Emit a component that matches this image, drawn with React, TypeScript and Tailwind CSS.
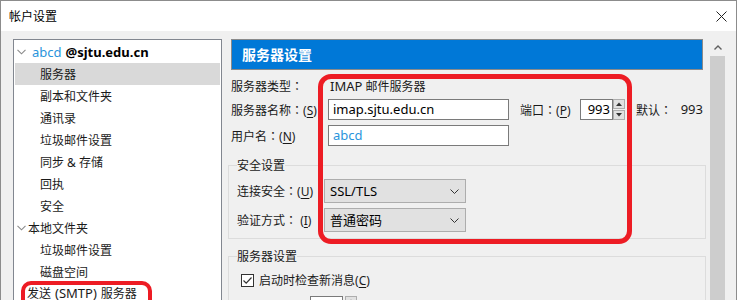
import React from "react";

function Chevron() {
  return (
    <svg width="9" height="6" viewBox="0 0 9 6" className="shrink-0">
      <path d="M0.5 0.8 L4.5 4.8 L8.5 0.8" fill="none" stroke="#8a8a8a" strokeWidth="1.1" />
    </svg>
  );
}

function Colon() {
  return <span className="font-['Noto_Sans_CJK_JP',sans-serif]">：</span>;
}

function Mn({ c }: { c: string }) {
  return (
    <span>
      (<span className="underline underline-offset-2">{c}</span>)
    </span>
  );
}

function Spinner() {
  return (
    <div className="flex h-[21px] w-[12px] flex-col justify-between">
      <div className="flex h-[10px] items-center justify-center border border-[#adadad] bg-[#e1e1e1]">
        <svg width="6" height="4" viewBox="0 0 6 4">
          <path d="M0 4 L3 0.5 L6 4 Z" fill="#333" />
        </svg>
      </div>
      <div className="flex h-[10px] items-center justify-center border border-[#adadad] bg-[#e1e1e1]">
        <svg width="6" height="4" viewBox="0 0 6 4">
          <path d="M0 0 L3 3.5 L6 0 Z" fill="#333" />
        </svg>
      </div>
    </div>
  );
}

function Select({ text }: { text: string }) {
  return (
    <div className="flex h-[24px] w-[142px] items-center justify-between border border-[#adadad] bg-[#e1e1e1] pl-[5px] pr-[6px] text-[13px] text-black">
      <span>{text}</span>
      <svg width="9" height="5" viewBox="0 0 9 5">
        <path d="M0.5 0.5 L4.5 4.5 L8.5 0.5" fill="none" stroke="#333" strokeWidth="1" />
      </svg>
    </div>
  );
}

function CheckBox({ checked }: { checked: boolean }) {
  return (
    <div className="flex h-[13px] w-[13px] shrink-0 items-center justify-center border border-[#333] bg-white">
      {checked && (
        <svg width="11" height="11" viewBox="0 0 11 11">
          <path d="M1.5 5.5 L4.2 8.2 L9.5 2.5" fill="none" stroke="#333" strokeWidth="1.2" />
        </svg>
      )}
    </div>
  );
}

const treeRows: { text: React.ReactNode; pl: string; selected?: boolean }[] = [
  { text: "服务器", pl: "pl-[25px]", selected: true },
  { text: "副本和文件夹", pl: "pl-[25px]" },
  { text: "通讯录", pl: "pl-[25px]" },
  { text: "垃圾邮件设置", pl: "pl-[25px]" },
  { text: "同步 & 存储", pl: "pl-[25px]" },
  { text: "回执", pl: "pl-[25px]" },
  { text: "安全", pl: "pl-[25px]" },
];

export default function App() {
  return (
    <div className="relative h-[300px] w-[737px] overflow-hidden border-x border-t border-[#8c8c8c] bg-[#f0f0f0] font-['Noto_Sans','Noto_Sans_CJK_SC',sans-serif] text-[12px] leading-[17px] text-[#1a1a1a]">
      {/* title bar */}
      <div className="flex h-[30px] items-center justify-between bg-white pl-[8px] pr-[9px]">
        <span className="text-[12px] text-black">帐户设置</span>
        <svg width="11" height="11" viewBox="0 0 11 11">
          <path d="M0.5 0.5 L10.5 10.5 M10.5 0.5 L0.5 10.5" stroke="#222" strokeWidth="1" />
        </svg>
      </div>

      {/* body */}
      <div className="flex pl-[12px] pt-[8px]">
        {/* tree */}
        <div className="h-[290px] w-[209px] shrink-0 border border-[#828790] bg-white p-px">
          <div className="flex h-[22px] items-center pl-[2px]">
            <Chevron />
            <span className="ml-[6px] text-[13px] text-[#2a94dc]">abcd</span>
            <span className="ml-[4px] text-[13px] font-bold text-black">@sjtu.edu.cn</span>
          </div>
          {treeRows.map((r, i) => (
            <div
              key={i}
              className={`flex h-[22px] items-center ${r.pl} ${r.selected ? "bg-[#d9d9d9]" : ""}`}
            >
              {r.text}
            </div>
          ))}
          <div className="flex h-[22px] items-center pl-[2px]">
            <Chevron />
            <span className="ml-[2px]">本地文件夹</span>
          </div>
          <div className="flex h-[22px] items-center pl-[25px]">垃圾邮件设置</div>
          <div className="flex h-[22px] items-center pl-[25px]">磁盘空间</div>
          <div className="flex h-[21px] items-center pl-[12px]">
            发送 <span className="mx-[4px] text-[13px]">(SMTP)</span> 服务器
          </div>
        </div>

        {/* right column */}
        <div className="ml-[6px] flex w-[478px] shrink-0 flex-col">
          <div className="mx-[3px] flex h-[31px] items-center border border-[#8a8a8a] bg-[#0078d7] pl-[10px] text-[14px] font-bold text-white">
            服务器设置
          </div>

          <div className="px-[3px]">
            <div className="mt-[6px] flex h-[20px] items-center">
              <span className="w-[99px] shrink-0">
                服务器类型<Colon />
              </span>
              <span>
                <span className="text-[13px]">IMAP</span> 邮件服务器
              </span>
            </div>

            <div className="mt-[3px] flex h-[21px] items-center">
              <span className="w-[97px] shrink-0 whitespace-nowrap">
                服务器名称<Colon />
                <Mn c="S" />
              </span>
              <div className="flex h-[21px] w-[181px] shrink-0 items-center border border-[#7a7a7a] bg-white pl-[4px] text-[13px] text-black">
                imap.sjtu.edu.cn
              </div>
              <span className="ml-[11px] w-[60px] shrink-0">
                端口<Colon />
                <Mn c="P" />
              </span>
              <div className="flex h-[21px] w-[33px] shrink-0 items-center justify-end border border-[#7a7a7a] bg-white pr-[2px] text-[13px] text-black">
                993
              </div>
              <Spinner />
              <span className="ml-[11px]">
                默认<Colon />
              </span>
              <span className="flex-1 text-right text-[13px]">993</span>
            </div>

            <div className="mt-[5px] flex h-[21px] items-center">
              <span className="w-[97px] shrink-0">
                用户名<Colon />
                <Mn c="N" />
              </span>
              <div className="flex h-[21px] w-[181px] shrink-0 items-center border border-[#7a7a7a] bg-white pl-[4px] text-[13px] text-[#2a94dc]">
                abcd
              </div>
            </div>
          </div>

          <fieldset className="mt-[11px] border border-[#dcdcdc] px-[8px] pb-[6px] pt-[5px]">
            <legend className="px-0 leading-[17px]">安全设置</legend>
            <div className="flex h-[24px] items-center">
              <span className="w-[87px] shrink-0">
                连接安全<Colon />
                <Mn c="U" />
              </span>
              <Select text="SSL/TLS" />
            </div>
            <div className="mt-[5px] flex h-[24px] items-center">
              <span className="w-[87px] shrink-0">
                验证方式<Colon /> <Mn c="I" />
              </span>
              <Select text="普通密码" />
            </div>
          </fieldset>

          <fieldset className="mt-[9px] border border-[#dcdcdc] px-[8px] pt-[6px]">
            <legend className="px-0 leading-[17px]">服务器设置</legend>
            <div className="flex h-[18px] items-center pl-[4px]">
              <CheckBox checked />
              <span className="ml-[5px]">
                启动时检查新消息<Mn c="C" />
              </span>
            </div>
            <div className="mt-[7px] flex h-[21px] items-center pl-[4px]">
              <div className="mt-[10px]">
                <CheckBox checked />
              </div>
              <span className="ml-[5px] mt-[10px] w-[51px]">每隔</span>
              <div className="h-[21px] w-[33px] border border-[#7a7a7a] bg-white" />
              <div className="ml-[2px]">
                <Spinner />
              </div>
              <span className="ml-[8px] mt-[8px]">
                分钟检查新消息<Mn c="Y" />
              </span>
            </div>
          </fieldset>
        </div>

        {/* scrollbar */}
        <div className="ml-[3px] flex h-[290px] w-[17px] shrink-0 flex-col items-center">
          <div className="flex h-[17px] w-full items-center justify-center">
            <svg width="8" height="5" viewBox="0 0 8 5">
              <path d="M0.5 4.5 L4 1 L7.5 4.5" fill="none" stroke="#606060" strokeWidth="1.4" />
            </svg>
          </div>
          <div className="h-[260px] w-[15px] bg-[#cdcdcd]" />
        </div>
      </div>

      {/* red annotations */}
      <div className="absolute left-[317px] top-[73px] h-[170px] w-[314px] rounded-[13px] border-[5px] border-[#ed1c24]" />
      <div className="absolute left-[20px] top-[280px] h-[40px] w-[131px] rounded-[10px] border-[4px] border-[#ed1c24]" />
    </div>
  );
}
